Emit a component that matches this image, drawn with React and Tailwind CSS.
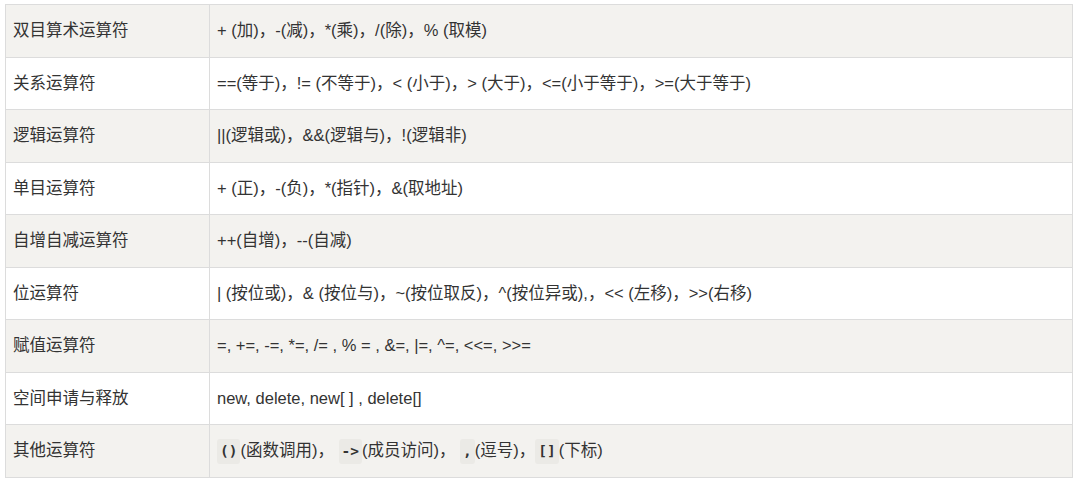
const Code = ({ children }) => (
  <code className="inline-block rounded-[3px] bg-[#ebeae6] px-[3px] py-[3px] font-['DejaVu_Sans_Mono',monospace] text-[14.5px] leading-[19px] font-bold text-[#333]">
    {children}
  </code>
)

const rows = [
  ["双目算术运算符", "+ (加)，-(减)，*(乘)，/(除)，% (取模)"],
  ["关系运算符", "==(等于)，!= (不等于)，< (小于)，> (大于)，<=(小于等于)，>=(大于等于)"],
  ["逻辑运算符", "||(逻辑或)，&&(逻辑与)，!(逻辑非)"],
  ["单目运算符", "+ (正)，-(负)，*(指针)，&(取地址)"],
  ["自增自减运算符", "++(自增)，--(自减)"],
  ["位运算符", "| (按位或)，& (按位与)，~(按位取反)，^(按位异或),，<< (左移)，>>(右移)"],
  ["赋值运算符", "=, +=, -=, *=, /= , % = , &=, |=, ^=, <<=, >>="],
  ["空间申请与释放", "new, delete, new[ ] , delete[]"],
  [
    "其他运算符",
    <>
      <Code>()</Code>(函数调用)， <Code>-&gt;</Code>(成员访问)， <Code>,</Code>(逗号)，<Code>[]</Code>(下标)
    </>,
  ],
]

export default function App() {
  return (
    <div className="h-[480px] w-[1080px] bg-white pl-[5px] pt-[4px] font-['Liberation_Sans','Noto_Sans_CJK_SC',sans-serif] text-[16.5px] text-[#333]">
      <table className="w-[1068px] border-collapse border border-[#dcdcdc]">
        <tbody>
          {rows.map(([name, desc], i) => (
            <tr key={i} className={`h-[52.5px] ${i % 2 === 0 ? "bg-[#f3f2ef]" : "bg-white"}`}>
              <td className="w-[204px] border border-[#dcdcdc] px-[7px] align-middle">{name}</td>
              <td className="border border-[#dcdcdc] px-[7px] align-middle">{desc}</td>
            </tr>
          ))}
        </tbody>
      </table>
    </div>
  )
}
